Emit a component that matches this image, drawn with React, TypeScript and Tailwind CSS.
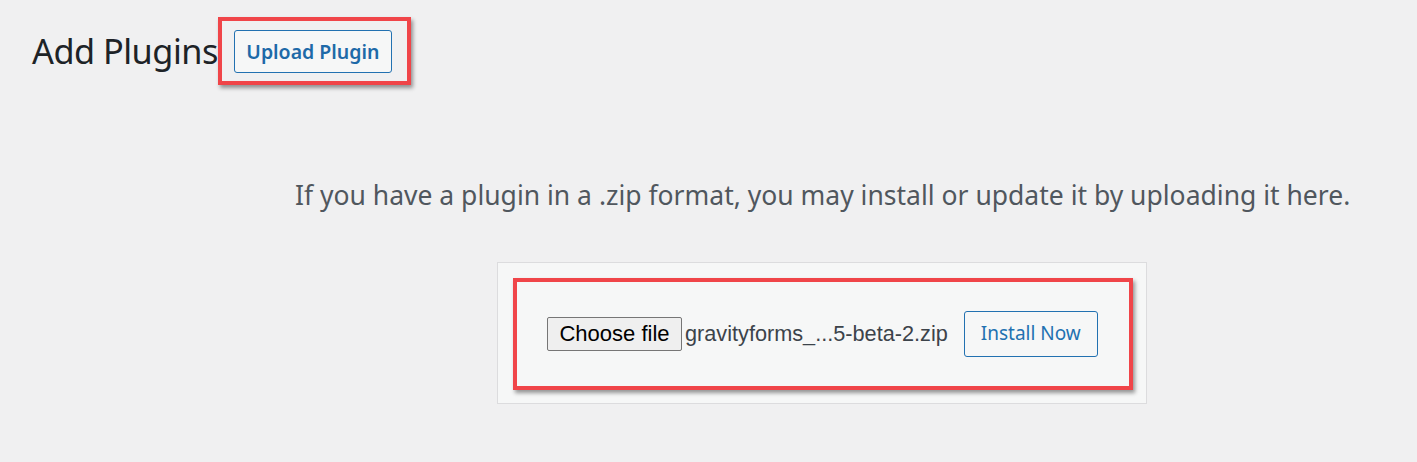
import React from "react";

export default function App() {
  const wp = { fontFamily: '"Noto Sans", "Open Sans", sans-serif' };
  const arial = { fontFamily: '"Liberation Sans", Arial, sans-serif' };
  return (
    <div className="w-[1417px] h-[462px] bg-[#f0f0f1] overflow-hidden" style={wp}>
      <div className="flex items-center pl-[32px] pt-[17px]">
        <h1 className="text-[34.3px] leading-none text-[#1d2327] font-normal tracking-[-0.5px]">Add Plugins</h1>
        <div className="border-4 border-[#f04549] shadow-[2px_3px_4px_rgba(0,0,0,0.4)] pl-[12px] pr-[15px] pt-[9px] pb-[8px]">
          <button className="h-[43px] w-[158px] rounded-[3px] border border-[#2271b1] bg-[#f6f7f7] text-[#1e6aa8] text-[19.5px] font-semibold leading-none">
            Upload Plugin
          </button>
        </div>
      </div>
      <p className="ml-[295px] mt-[97px] text-[26.5px] leading-none text-[#50575e] whitespace-nowrap">
        If you have a plugin in a .zip format, you may install or update it by uploading it here.
      </p>
      <div className="ml-[497px] mt-[53px] w-[650px] h-[142px] border border-[#dcdcde] bg-[#f6f7f7] pl-[15px] pt-[15px]">
        <div className="w-[620px] h-[112px] border-4 border-[#f04549] shadow-[2px_3px_4px_rgba(0,0,0,0.4)] flex items-center pl-[30px]">
          <button
            className="h-[34px] w-[135px] rounded-[2px] border border-[#767676] bg-[#efefef] text-[22px] text-black leading-none"
            style={arial}
          >
            Choose file
          </button>
          <span className="ml-[3px] text-[21.7px] text-[#3c434a] leading-none" style={arial}>
            gravityforms_...5-beta-2.zip
          </span>
          <button className="ml-[16px] h-[46px] w-[134px] rounded-[3px] border border-[#2271b1] bg-[#f6f7f7] text-[#2271b1] text-[19px] leading-none">
            Install Now
          </button>
        </div>
      </div>
    </div>
  );
}
